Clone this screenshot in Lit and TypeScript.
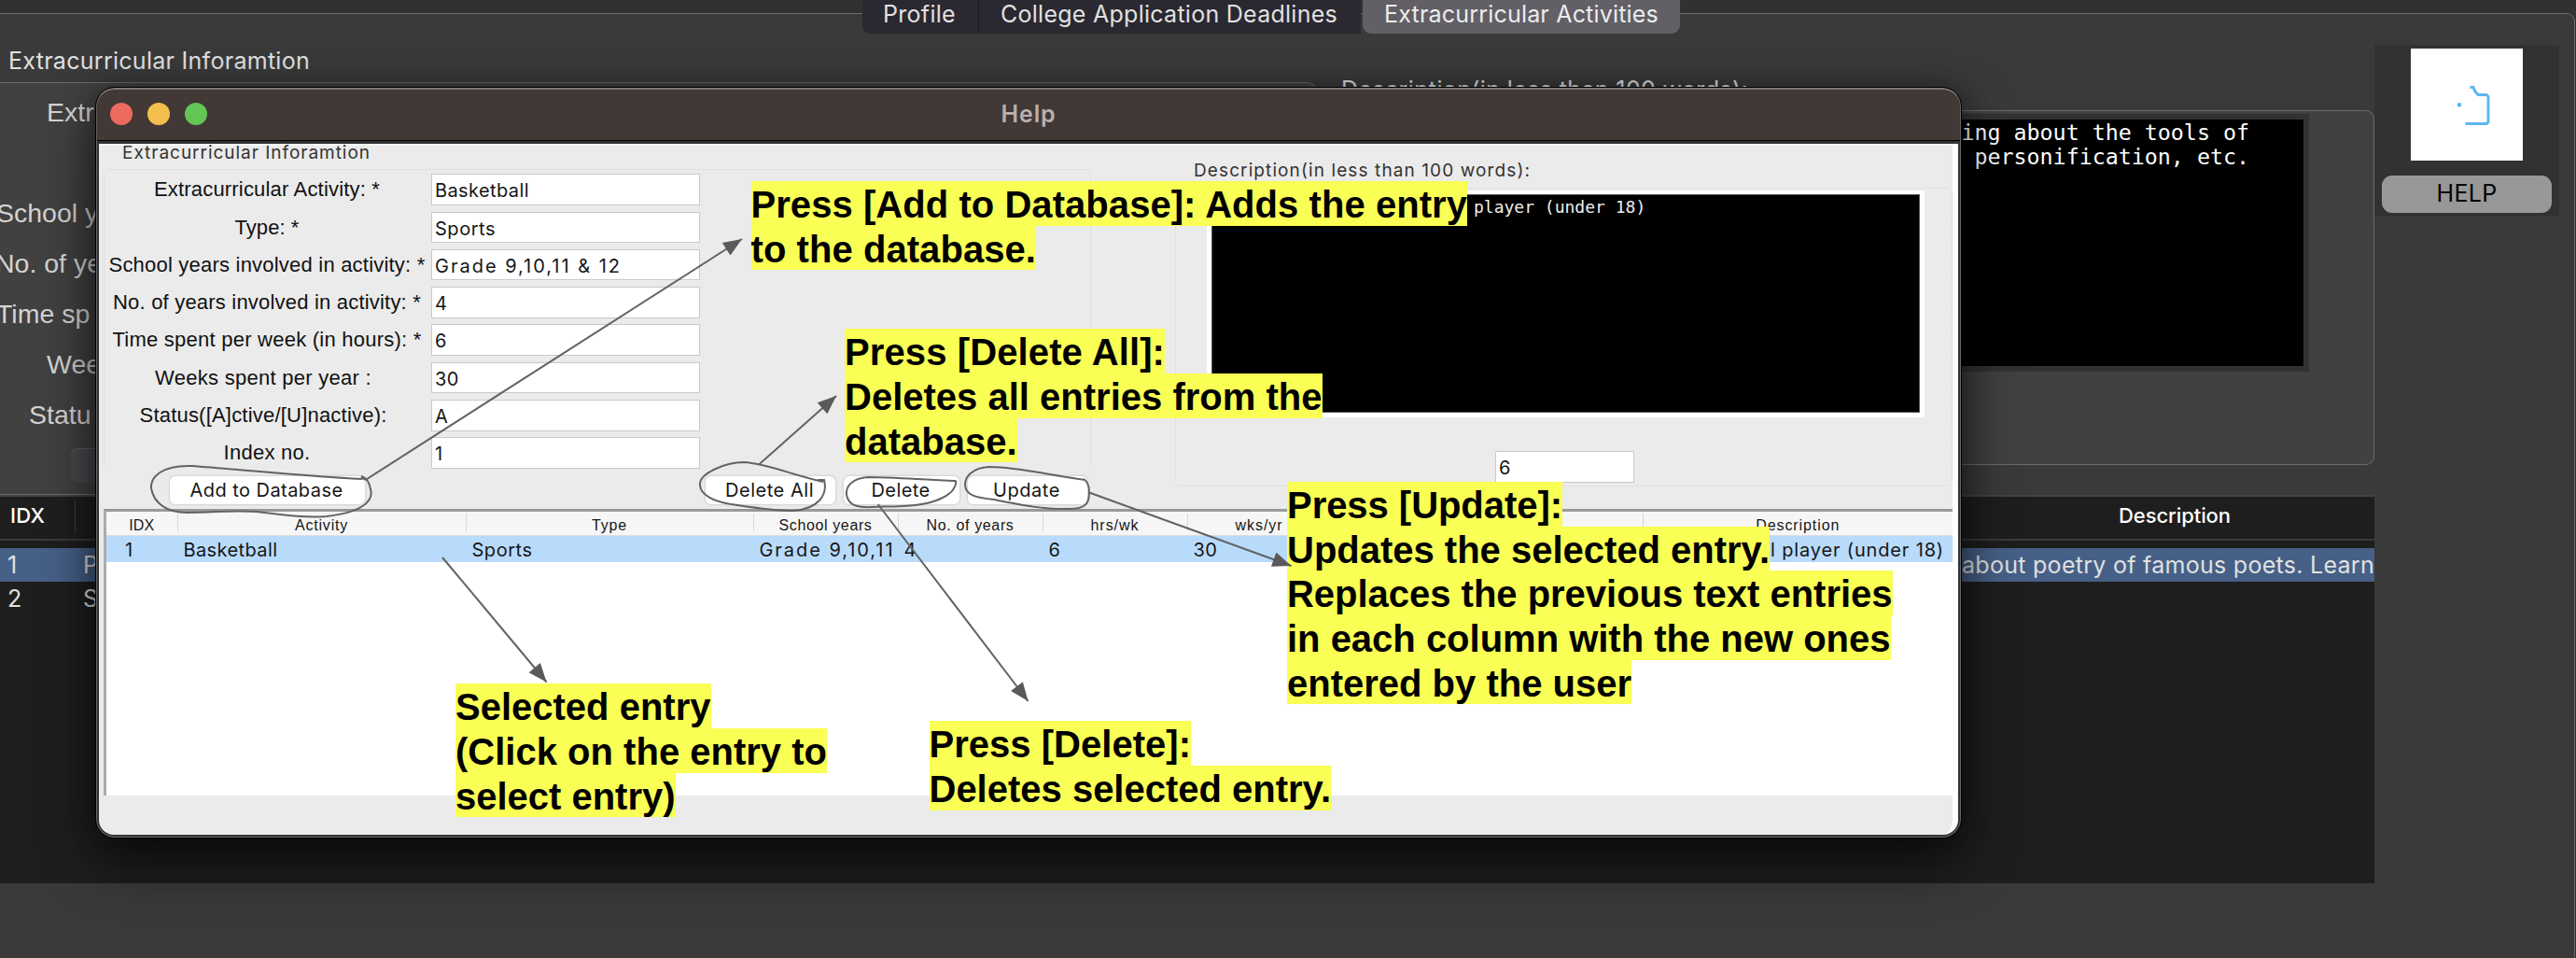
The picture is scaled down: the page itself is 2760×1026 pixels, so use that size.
import { LitElement, html, css, svg } from "lit";
import { customElement, property } from "lit/decorators.js";

/** Inline text whose letter spacing is adjusted so that it fills `width` pixels. */
@customElement("fit-text")
class FitText extends LitElement {
  @property({ type: Number }) width = 0;

  static styles = css`
    :host {
      display: inline-block;
      white-space: pre;
    }
  `;

  firstUpdated() {
    const count = (this.textContent ?? "").length;
    const natural = this.getBoundingClientRect().width;
    if (this.width && count) {
      this.style.letterSpacing = `${(this.width - natural) / count}px`;
    }
  }

  render() {
    return html`<slot></slot>`;
  }
}

const fit = (text: string, width: number) =>
  html`<fit-text width=${width}>${text}</fit-text>`;

/* ---------- Help window ---------- */

interface FormRow {
  label: string;
  labelWidth: number;
  value: string;
  valueWidth: number;
  optional?: boolean;
}

const FORM: FormRow[] = [
  { label: "Extracurricular Activity: *", labelWidth: 242, value: "Basketball", valueWidth: 101 },
  { label: "Type: *", labelWidth: 69, value: "Sports", valueWidth: 65 },
  { label: "School years involved in activity: *", labelWidth: 339, value: "Grade 9,10,11 & 12", valueWidth: 200 },
  { label: "No. of years involved in activity: *", labelWidth: 330, value: "4", valueWidth: 13 },
  { label: "Time spent per week (in hours): *", labelWidth: 331, value: "6", valueWidth: 13 },
  { label: "Weeks spent per year :", labelWidth: 232, value: "30", valueWidth: 26, optional: true },
  { label: "Status([A]ctive/[U]nactive):", labelWidth: 265, value: "A", valueWidth: 13, optional: true },
  { label: "Index no.", labelWidth: 93, value: "1", valueWidth: 10 },
];

const COLUMNS: [string, number, string, number][] = [
  ["IDX", 27, "1", 10],
  ["Activity", 57, "Basketball", 101],
  ["Type", 38, "Sports", 65],
  ["School years", 100, "Grade 9,10,11", 145],
  ["No. of years", 94, "4", 13],
  ["hrs/wk", 52, "6", 13],
  ["wks/yr", 51, "30", 26],
  ["", 0, "", 0],
  ["Description", 90, "l player (under 18)", 186],
];

const NOTES: { cls: string; lines: [string, number][] }[] = [
  {
    cls: "note-add",
    lines: [
      ["Press [Add to Database]: Adds the entry", 767.5],
      ["to the database.", 305.5],
    ],
  },
  {
    cls: "note-delete-all",
    lines: [
      ["Press [Delete All]:", 343],
      ["Deletes all entries from the", 511.5],
      ["database.", 184.5],
    ],
  },
  {
    cls: "note-update",
    lines: [
      ["Press [Update]:", 295],
      ["Updates the selected entry.", 517],
      ["Replaces the previous text entries", 648.5],
      ["in each column with the new ones", 646.5],
      ["entered by the user", 369],
    ],
  },
  {
    cls: "note-select",
    lines: [
      ["Selected entry", 273.5],
      ["(Click on the entry to", 398],
      ["select entry)", 235.5],
    ],
  },
  {
    cls: "note-delete",
    lines: [
      ["Press [Delete]:", 280.5],
      ["Deletes selected entry.", 430.5],
    ],
  },
];

const ARROWS: [number, number, number, number][] = [
  [391.6, 514, 795, 256],
  [813.7, 497, 896, 424],
  [940.7, 540, 1101.6, 751],
  [1167, 527.5, 1383.5, 606],
  [474, 597, 585.6, 730.5],
];

const LOOPS = [
  "M387 511 L391 514 M388 513 C340 511 260 503 205 499 C175 498 161 510 162 523 C165 540 180 549 200 549 C230 549 250 546 275 548 C300 551 325 555 350 553 C385 549 401 538 397 524 C396 516 393 512 387 510",
  "M882 516 C850 509 820 496 797 495 C775 495 750 508 750 518 C749 530 765 538 790 541 C810 544 835 547 850 547 C877 545 887 530 883 514 L876 514",
  "M1024.5 515 C990 514 960 511 930 511 C912 512 906 522 907 530 C909 540 916 544 935 543 C960 542 990 543 1008 534 C1020 529 1024 522 1024.5 515",
  "M1163 514 C1130 510 1090 500 1060 500 C1040 501 1034 512 1034 519 C1034 530 1045 533 1065 535 C1095 541 1120 546 1145 545 C1165 545 1167 538 1167 527 C1167 520 1164 515 1161 513",
];

@customElement("help-window")
class HelpWindow extends LitElement {
  static styles = css`
    :host {
      display: flex;
      flex-direction: column;
      box-sizing: border-box;
      width: 2000px;
      height: 805px;
      border: 1px solid #000;
      border-radius: 21px;
      overflow: hidden;
      background: #333334;
      color: #161616;
      font: 20px/18px Inter, "Liberation Sans", sans-serif;
      box-shadow: 0 26px 60px rgba(0, 0, 0, 0.62), 0 0 30px rgba(0, 0, 0, 0.3);
    }
    .titlebar {
      display: grid;
      grid-template-columns: 1fr auto 1fr;
      align-items: center;
      height: 56px;
      box-sizing: border-box;
      padding: 0 14px 2px;
      background: #423836;
      border: 1px solid #67605d;
      border-top: 2px solid #7d7674;
      border-bottom: 0;
      border-radius: 20px 20px 0 0;
      box-shadow: 0 1px 0 #000;
    }
    .lights {
      display: flex;
      gap: 16px;
    }
    .light {
      width: 24px;
      height: 24px;
      border-radius: 50%;
    }
    .red { background: #ed6a5e; }
    .amber { background: #f5bf4f; }
    .green { background: #62c554; }
    .title {
      font-size: 25px;
      font-weight: 600;
      line-height: 29px;
      color: #b9b0ae;
    }
    .frame {
      flex: 1;
      padding: 4px 2px 2px 2px;
      border: 1px solid #68686a;
      border-top: 0;
      border-radius: 0 0 20px 20px;
    }
    .body {
      position: relative;
      width: 1992px;
      height: 740px;
      box-sizing: border-box;
      overflow: hidden;
      background: #ebebeb;
      border-right: 6px solid #fff;
      border-radius: 0 0 16px 16px;
      box-shadow: inset 0 2px 0 #f8f8f8;
    }
    .top {
      display: flex;
      gap: 90px;
      height: 391px;
      padding-left: 5px;
    }
    .left { width: 1058px; }
    .right { width: 833px; }
    .caption {
      box-sizing: border-box;
      height: 27px;
      padding: 1px 0 0 20px;
      color: #333;
      font-size: 19px;
    }
    .right .caption { height: 47px; padding: 20px 0 0 20px; }
    .group {
      box-sizing: border-box;
      border: 1px dotted #d4d4d4;
      border-bottom-color: transparent;
      border-radius: 6px;
    }
    .form {
      display: grid;
      grid-template-columns: 350px 287.5px;
      grid-auto-rows: 33.5px;
      row-gap: 6.8px;
      padding-top: 4.3px;
    }
    .label {
      text-align: center;
      font: 22px/34.5px "Liberation Sans", Arial, sans-serif;
      padding-right: 2px;
      color: #111;
    }
    .label.optional { padding-right: 10px; }
    .field {
      box-sizing: border-box;
      background: #fff;
      border: 1.5px solid #c9c9c9;
      line-height: 34.5px;
      padding-left: 3px;
    }
    .buttons {
      display: flex;
      padding: 7px 0 0 71px;
    }
    .button {
      box-sizing: border-box;
      height: 30px;
      line-height: 30px;
      padding-right: 2px;
      text-align: center;
      background: #fff;
      border-radius: 6px;
      box-shadow: 0 0 2px 1px #d2d2d2;
    }
    .b-add { width: 209px; margin-right: 365px; }
    .b-all { width: 139px; margin-right: 9px; }
    .b-del { width: 124px; margin-right: 9px; }
    .b-upd { width: 128px; }
    .right .group {
      height: 320px;
      padding: 2px 0 0 33px;
      border-bottom-color: #d4d4d4;
    }
    .area {
      box-sizing: border-box;
      width: 769px;
      height: 243px;
      background: #000;
      border: 5px solid #fff;
      border-top-width: 4px;
      color: #eee;
      font: 18px/20px "DejaVu Sans Mono", monospace;
      padding: 4px 0 0 281px;
      box-shadow: inset 0 0 0 1px #555;
    }
    .count {
      width: 149px;
      height: 34px;
      margin: 36px 0 0 309px;
    }
    .table {
      box-sizing: border-box;
      height: 307px;
      margin-left: 5px;
      background: #fff;
      border-top: 3px solid #999;
      border-left: 3px solid #ababab;
    }
    .row {
      display: grid;
      grid-template-columns: 76.5px 309px 308px 155px 155px 155px 154px 334px 1fr;
    }
    .head {
      height: 25px;
      background: #f6f6f6;
      border-bottom: 1px solid #ddd;
      font: 16px/28px "Liberation Sans", Arial, sans-serif;
    }
    .head .cell {
      height: 19px;
      margin-top: 2px;
      line-height: 25px;
      text-align: center;
      border-right: 1px solid #d8d8d8;
    }
    .head .cell:last-child { border: 0; }
    .selected {
      height: 28px;
      line-height: 31px;
      background: #b9dbfb;
    }
    .selected .cell { padding-left: 6px; }
    .selected .cell:first-child { padding-left: 20px; }
    .selected .cell:last-child { text-align: right; padding: 0 9px 0 0; }
    .note {
      position: absolute;
      display: flex;
      flex-direction: column;
      align-items: flex-start;
      color: #000;
      font: bold 40px/50px "Liberation Sans", Arial, sans-serif;
    }
    .line { background: #f9ff54; height: 47.7px; }
    .note-add { left: 698.5px; top: 40px; }
    .note-delete-all { left: 799px; top: 198.4px; }
    .note-update { left: 1273px; top: 362px; }
    .note-select { left: 382px; top: 578.4px; }
    .note-delete { left: 889.5px; top: 618.4px; }
    .ink {
      position: absolute;
      inset: 0;
      width: 1992px;
      height: 740px;
    }
  `;

  render() {
    return html`
      <div class="titlebar">
        <div class="lights">
          <div class="light red"></div>
          <div class="light amber"></div>
          <div class="light green"></div>
        </div>
        <div class="title">${fit("Help", 59)}</div>
      </div>
      <div class="frame">
        <div class="body">
          <div class="top">
            <div class="left">
              <div class="caption">${fit("Extracurricular Inforamtion", 266)}</div>
              <div class="group form">
                ${FORM.map(
                  (r) => html`
                    <div class="label ${r.optional ? "optional" : ""}">${fit(r.label, r.labelWidth)}</div>
                    <div class="field">${fit(r.value, r.valueWidth)}</div>
                  `,
                )}
              </div>
              <div class="buttons">
                <div class="button b-add">${fit("Add to Database", 164)}</div>
                <div class="button b-all">${fit("Delete All", 95)}</div>
                <div class="button b-del">${fit("Delete", 63)}</div>
                <div class="button b-upd">${fit("Update", 72)}</div>
              </div>
            </div>
            <div class="right">
              <div class="caption">${fit("Description(in less than 100 words):", 361)}</div>
              <div class="group">
                <div class="area">player (under 18)</div>
                <div class="field count">${fit("6", 13)}</div>
              </div>
            </div>
          </div>
          <div class="table">
            <div class="row head">
              ${COLUMNS.map(([t, w]) => html`<div class="cell">${t ? fit(t, w) : ""}</div>`)}
            </div>
            <div class="row selected">
              ${COLUMNS.map(([, , t, w]) => html`<div class="cell">${t ? fit(t, w) : ""}</div>`)}
            </div>
          </div>
          ${NOTES.map(
            (n) => html`<div class="note ${n.cls}">
              ${n.lines.map(([t, w]) => html`<div class="line">${fit(t, w)}</div>`)}
            </div>`,
          )}
          <svg class="ink" viewBox="106 154 1992 740" fill="none" stroke="#636363" stroke-width="2">
            <defs>
              <marker id="head" viewBox="0 0 20 16" refX="20" refY="8" markerWidth="21" markerHeight="16"
                markerUnits="userSpaceOnUse" orient="auto">
                <path d="M0 0 L20 8 L0 16 Z" fill="#5a5a5a" stroke="none"></path>
              </marker>
            </defs>
            ${LOOPS.map((d) => svg`<path d=${d}></path>`)}
            ${ARROWS.map(
              ([x1, y1, x2, y2]) =>
                svg`<line x1=${x1} y1=${y1} x2=${x2} y2=${y2} marker-end="url(#head)"></line>`,
            )}
          </svg>
        </div>
      </div>
    `;
  }
}

/* ---------- Main page ---------- */

@customElement("app-root")
class AppRoot extends LitElement {
  static styles = css`
    :host {
      display: block;
      position: relative;
      box-sizing: border-box;
      width: 2760px;
      height: 1026px;
      padding-top: 14px;
      overflow: hidden;
      background: #313131;
      color: #e0e0e0;
      font: 25px/30px Inter, "Liberation Sans", sans-serif;
    }
    .tabs {
      position: absolute;
      top: 0;
      left: 924px;
      display: flex;
      height: 36px;
      line-height: 30px;
      text-align: center;
    }
    .tab { background: #2a2830; }
    .tab-profile { width: 122px; padding-right: 2px; border-bottom-left-radius: 9px; }
    .tab-college { width: 407px; padding-right: 2px; border-left: 1px solid #1d1b22; margin-right: 2px; }
    .tab-extra {
      width: 340px;
      background: #625f66;
      color: #ececec;
      border-radius: 0 0 9px 9px;
    }
    .pane {
      display: flex;
      box-sizing: border-box;
      width: 2759px;
      height: 1030px;
      background: #3a3a3a;
      border: 1px solid #6c6c6c;
      border-left: 0;
      border-radius: 0 9px 0 0;
    }
    .main { width: 2544px; }
    .groups {
      display: flex;
      height: 515px;
    }
    .left { width: 1410px; }
    .right { width: 1134px; }
    .caption {
      box-sizing: border-box;
      height: 73px;
      padding: 35px 0 0 9px;
    }
    .right .caption {
      height: 103px;
      padding: 66px 0 0 27px;
    }
    .box {
      box-sizing: border-box;
      background: #414141;
      border: 1px solid #6c6c6c;
      border-left: 0;
    }
    .left .box {
      height: 442px;
      border-radius: 0 9px 0 0;
      padding-top: 4px;
      font: 28.5px/54px "Liberation Sans", Arial, sans-serif;
      color: #d4d4d4;
    }
    .row-label { height: 54px; white-space: pre; }
    .in-a { margin-left: 50px; }
    .in-b { margin-left: -4px; }
    .in-c { margin-left: -5px; }
    .in-d { margin-left: -4px; }
    .in-e { margin-left: 50px; }
    .in-f { margin-left: 31px; }
    .add {
      width: 200px;
      height: 37px;
      margin: 9px 0 0 76px;
      border-radius: 8px;
      background: #4a484e;
      box-shadow: inset 0 1px 0 #626066;
    }
    .right .box {
      height: 380px;
      border-radius: 0 9px 9px 0;
      padding-top: 3px;
    }
    .area {
      box-sizing: border-box;
      width: 1064px;
      height: 276px;
      border: 6px solid #323232;
      background: #000;
      color: #fff;
      text-align: right;
      white-space: pre;
      padding: 1px 58px 0 0;
      font: 23.3px/26.2px "DejaVu Sans Mono", monospace;
    }
    .table {
      height: 416px;
      background: #1e1e1e;
    }
    .thead {
      display: flex;
      box-sizing: border-box;
      height: 49px;
      border-top: 2px solid #444;
      border-bottom: 2px solid #3a3a3a;
      font-size: 22px;
      font-weight: 500;
      line-height: 41px;
      color: #fff;
      padding-left: 11px;
      justify-content: space-between;
    }
    .idx { width: 69px; height: 36px; margin-top: 4px; line-height: 33px; border-right: 1px solid #3c3c3c; }
    .desc { padding-right: 154px; }
    .trow {
      display: flex;
      justify-content: space-between;
      height: 36px;
      line-height: 37px;
      padding-left: 8px;
      overflow: hidden;
    }
    .trow.on { margin-top: 8px; background: #466087; }
    .cells { display: grid; grid-template-columns: 81px auto; }
    .side {
      box-sizing: border-box;
      width: 198px;
      height: 184px;
      margin-top: 33px;
      padding: 4px 8px 0;
      background: #323232;
      display: flex;
      flex-direction: column;
      align-items: center;
      gap: 16px;
    }
    .logo { width: 120px; height: 120px; background: #fff; }
    .help {
      width: 182px;
      height: 40px;
      line-height: 38px;
      text-align: center;
      color: #000;
      background: #989898;
      border-radius: 11px;
    }
    .window {
      position: absolute;
      left: 102px;
      top: 93px;
    }
  `;

  render() {
    return html`
      <div class="pane">
        <div class="main">
          <div class="groups">
            <div class="left">
              <div class="caption">${fit("Extracurricular Inforamtion", 323)}</div>
              <div class="box">
                <div class="row-label in-a">Extr</div>
                <div class="row-label"></div>
                <div class="row-label in-b">School y</div>
                <div class="row-label in-c">No. of ye</div>
                <div class="row-label in-d">Time sp</div>
                <div class="row-label in-e">Wee</div>
                <div class="row-label in-f">Statu</div>
                <div class="add"></div>
              </div>
            </div>
            <div class="right">
              <div class="caption">${fit("Description(in less than 100 words):", 436)}</div>
              <div class="box">
                <div class="area">ing about the tools of
 personification, etc.</div>
              </div>
            </div>
          </div>
          <div class="table">
            <div class="thead">
              <div class="idx">${fit("IDX", 37)}</div>
              <div class="desc">${fit("Description", 120)}</div>
            </div>
            <div class="trow on">
              <div class="cells"><span>1</span><span>P</span></div>
              ${fit("about poetry of famous poets. Learn", 442)}
            </div>
            <div class="trow">
              <div class="cells"><span>2</span><span>S</span></div>
            </div>
          </div>
        </div>
        <div class="side">
          <svg class="logo" viewBox="0 0 120 120" fill="none" stroke="#5bb7f0" stroke-width="3">
            <path d="M63.5 41.5 H67 L69 46 L72 49.5 H81 L83 51.5 V78.5 L81.5 80.5 H58.5"></path>
            <path d="M50 60.3 H54" stroke-width="4"></path>
          </svg>
          <div class="help">${fit("HELP", 65)}</div>
        </div>
      </div>
      <div class="tabs">
        <div class="tab tab-profile">${fit("Profile", 78)}</div>
        <div class="tab tab-college">${fit("College Application Deadlines", 361)}</div>
        <div class="tab tab-extra">${fit("Extracurricular Activities", 294)}</div>
      </div>
      <help-window class="window"></help-window>
    `;
  }
}
